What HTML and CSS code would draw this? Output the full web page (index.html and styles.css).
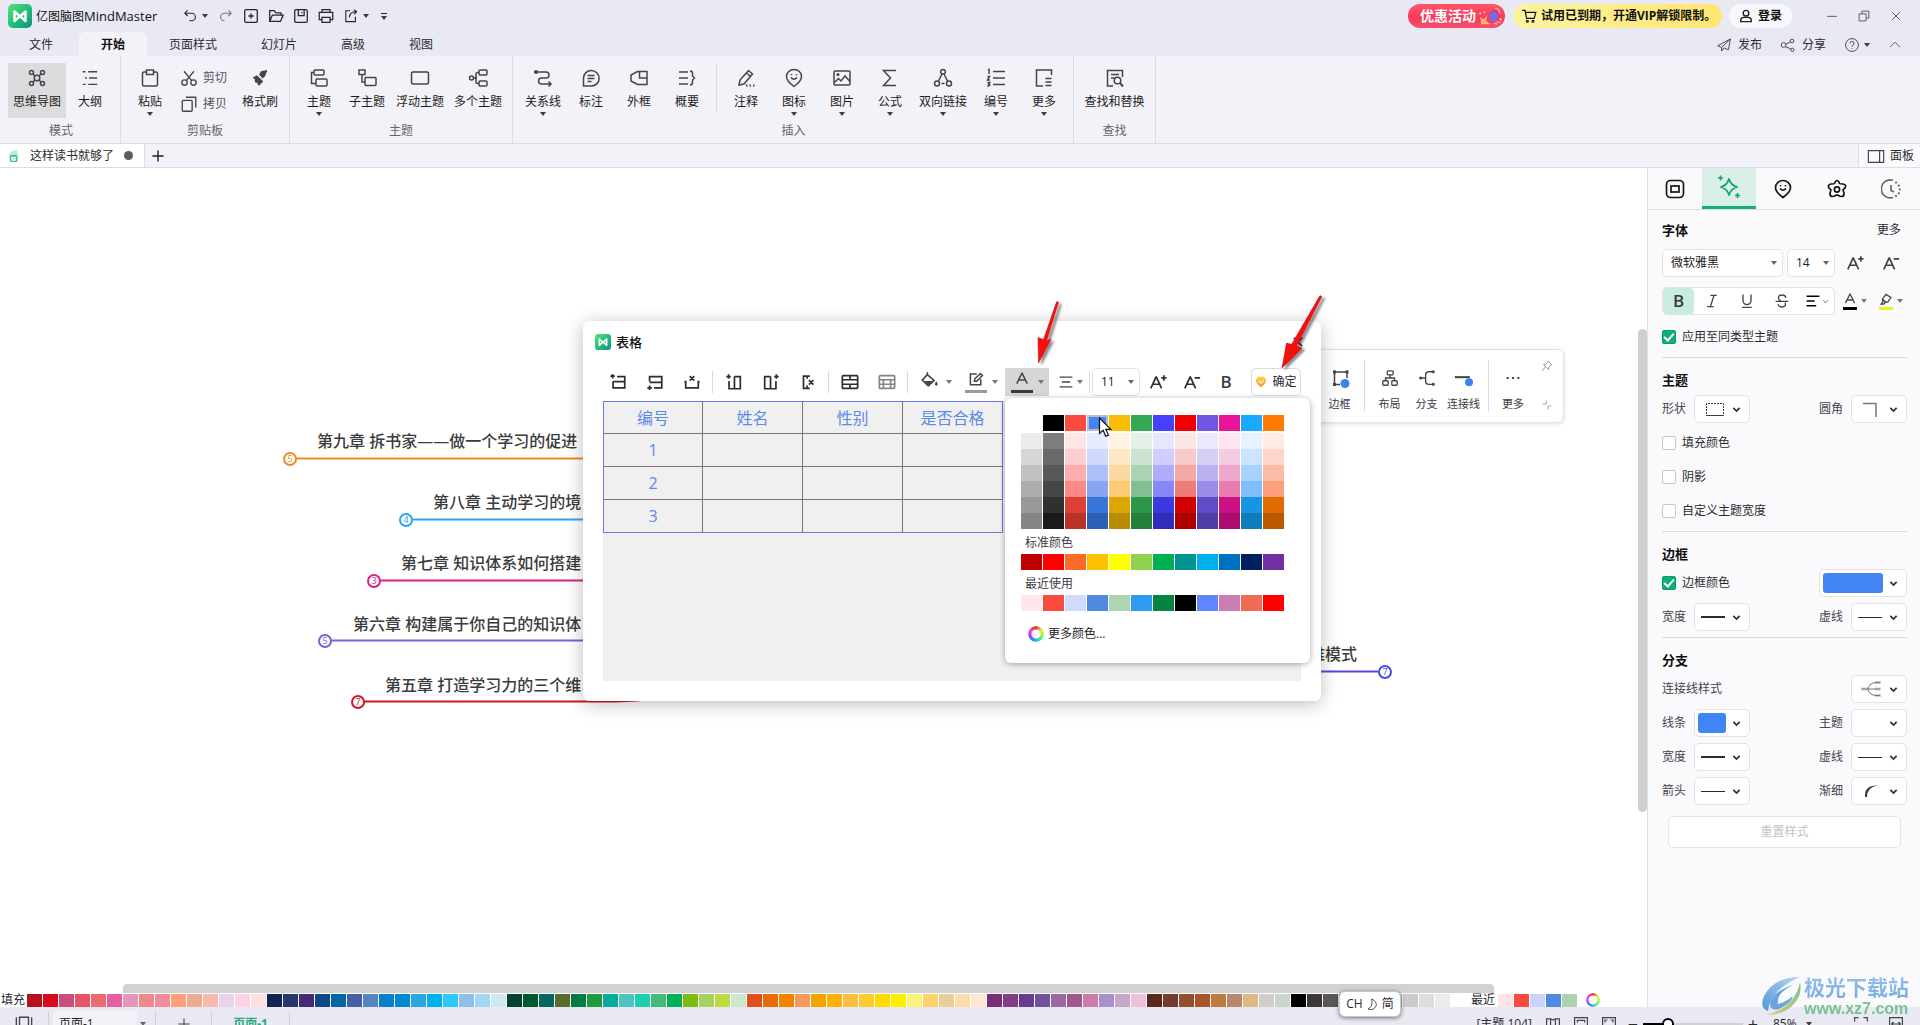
FILE: index.html
```html
<!DOCTYPE html>
<html lang="zh-CN">
<head>
<meta charset="utf-8">
<title>亿图脑图MindMaster</title>
<link rel="stylesheet" href="styles.css">
</head>
<body>
<svg class="sprite" aria-hidden="true">
  <defs>
    <linearGradient id="g-logo" x1="0" y1="0" x2="1" y2="1"><stop offset="0" stop-color="#5be07a"/><stop offset=".5" stop-color="#22c07a"/><stop offset="1" stop-color="#0f8f86"/></linearGradient>
    <linearGradient id="g-gem" x1="0" y1="0" x2="0" y2="1"><stop offset="0" stop-color="#ffd24a"/><stop offset="1" stop-color="#ff8f1f"/></linearGradient>
    <linearGradient id="g-wm1" x1="0" y1="1" x2="1" y2="0"><stop offset="0" stop-color="#2f7fd0"/><stop offset="1" stop-color="#9fd0f2"/></linearGradient>
    <linearGradient id="g-wm2" x1="0" y1="1" x2="1" y2="0"><stop offset="0" stop-color="#c9c94a"/><stop offset="1" stop-color="#5fb27a"/></linearGradient>
    <symbol id="logo" viewBox="0 0 24 24"><rect width="24" height="24" rx="5" fill="url(#g-logo)"/><path d="M6.5 17V7.500l5.500 5 5.500-5V17l-5.500-5z" fill="none" stroke="#fff" stroke-width="2.400" stroke-linejoin="round"/></symbol>
    <symbol id="i-undo" viewBox="0 0 20 20"><path d="M7 3 3.500 6.500 7 10M4 6.500h8a4.500 4.500 0 0 1 0 9.500H9"/></symbol>
    <symbol id="i-redo" viewBox="0 0 20 20"><path d="m13 3 3.500 3.500L13 10m3-3.500H8A4.500 4.500 0 0 0 8 16"/></symbol>
    <symbol id="i-new" viewBox="0 0 20 20"><rect x="3" y="3" width="14" height="14" rx="1.500"/><path d="M10 7v6M7 10h6"/></symbol>
    <symbol id="i-open" viewBox="0 0 20 20"><path d="M3 16V4h5l2 2.500h5.500V9M3 16l3-7h12l-3 7z"/></symbol>
    <symbol id="i-save" viewBox="0 0 20 20"><rect x="3" y="3" width="14" height="14" rx="1.500"/><path d="M7 3v6.500h6.500V3M11 5.500v1.500"/></symbol>
    <symbol id="i-print" viewBox="0 0 20 20"><path d="M5.500 6V3h9v3M5 14H2.500V6h15v8H15M5.500 11.500h9V17h-9z"/></symbol>
    <symbol id="i-export" viewBox="0 0 20 20"><path d="M9 3.500H3.500v13.500h12V11M8 12c0-5 3-7.500 9-7.500M13.500 2 17 4.500 14 8"/></symbol>
    <symbol id="i-mind" viewBox="0 0 20 20"><circle cx="10" cy="10" r="2.800"/><circle cx="4.500" cy="4.500" r="2"/><circle cx="15.500" cy="4.500" r="2"/><circle cx="4.500" cy="15.500" r="2"/><circle cx="15.500" cy="15.500" r="2"/><path d="M6 6l2 2M14 6l-2 2M6 14l2-2M14 14l-2-2"/></symbol>
    <symbol id="i-outline" viewBox="0 0 20 20"><path d="M2 3h3M8 3h10M4.500 10h2M9 10h9M2 17h3M8 17h10"/></symbol>
    <symbol id="i-paste" viewBox="0 0 20 20"><rect x="2.500" y="4" width="15" height="14" rx="1.500"/><path d="M6.500 2h7v4.500h-7z" fill="#f2f2f8"/></symbol>
    <symbol id="i-cut" viewBox="0 0 20 20"><circle cx="5" cy="15" r="3"/><circle cx="15" cy="15" r="3"/><path d="M4.500 2.500 13 13M15.500 2.500 7 13"/></symbol>
    <symbol id="i-copy" viewBox="0 0 20 20"><rect x="2.500" y="6" width="11" height="12" rx="1"/><path d="M6.500 2.500h11V14"/></symbol>
    <symbol id="i-brush" viewBox="0 0 20 20"><path d="M12.500 7 17.500 2M5.500 8l7 7" /><path d="M11 2.500 18 1l-2 6.500-3 3-4-4zM2 9.500 6.500 7l7 6.500-4.500 5-2-1.500.500-2-2 .5-1.500-2 .5-1.500z" fill="#454549" stroke="none"/></symbol>
    <symbol id="i-topic" viewBox="0 0 20 20"><rect x="5" y="2" width="10" height="5" rx="1"/><rect x="7" y="11" width="11" height="7" rx="1"/><path d="M5 4.500H2.500v11H7"/></symbol>
    <symbol id="i-subtopic" viewBox="0 0 20 20"><rect x="2" y="2" width="6" height="4.500"/><rect x="8" y="9.500" width="11" height="8" rx="1"/><path d="M5 7v7h3"/></symbol>
    <symbol id="i-float" viewBox="0 0 20 20"><rect x="1.500" y="4" width="17" height="12" rx="1.500"/></symbol>
    <symbol id="i-multi" viewBox="0 0 20 20"><rect x="11" y="2" width="8" height="5" rx="1"/><rect x="11" y="13" width="8" height="5" rx="1"/><circle cx="3.500" cy="10" r="2"/><path d="M5.500 10H9M11 4.500H9.500Q8 4.500 8 6v8q0 1.500 1.500 1.500H11"/></symbol>
    <symbol id="i-relation" viewBox="0 0 20 20"><circle cx="3" cy="4" r="1.300" fill="#454549"/><path d="M3 4h10q3 0 3 3t-3 3H8.500q-3 0-3 3t3 3H18M15.500 13.500 18 16l-2.500 2.500"/></symbol>
    <symbol id="i-note" viewBox="0 0 20 20"><path d="M2.500 18V10a7.800 7.800 0 1 1 8 8zM6.500 7.500h7M6.500 10.500h7M6.500 13.500h4"/></symbol>
    <symbol id="i-frame" viewBox="0 0 20 20"><path d="M18 3.500H8.500L2 7v6l6.500 3.500H18zM18 10h-7.500V4"/></symbol>
    <symbol id="i-summary" viewBox="0 0 20 20"><path d="M2 4h9M2 10h9M2 16h9M13 3q2.500 0 2.500 2.500V8l2 2-2 2v2.500Q15.500 17 13 17"/></symbol>
    <symbol id="i-pen" viewBox="0 0 20 20"><path d="M3 17l1-5 8.500-9.500 4 3.500L8 16zM10.500 5l4 3.500"/><path d="M10 17.500h1.500M13.500 17.500H15M17 17.500h1.500" stroke-width="2"/></symbol>
    <symbol id="i-smile" viewBox="0 0 20 20"><path d="M10 18.500q-7.500-5.500-7.500-10a7.500 7 0 0 1 15 0q0 4.500-7.500 10zM7 9.500q3 3.500 6 0M7.500 6v1.200M12.500 6v1.200"/></symbol>
    <symbol id="i-image" viewBox="0 0 20 20"><rect x="2" y="3" width="16" height="14" rx="1"/><path d="m2.500 14.500 4-4 2.500 2.500 4-5 5 5.500"/><circle cx="6" cy="6.500" r=".8"/></symbol>
    <symbol id="i-sigma" viewBox="0 0 20 20"><path d="M16 2.500H3.500l7 7.500-7 7.500H16"/></symbol>
    <symbol id="i-link" viewBox="0 0 20 20"><circle cx="10" cy="3.800" r="2.300"/><circle cx="4" cy="15.500" r="2.500"/><circle cx="16" cy="15.500" r="2.500"/><path d="m9 6-3.500 7M11 6l3.500 7M8.500 15.500h3"/></symbol>
    <symbol id="i-number" viewBox="0 0 20 20"><path d="M7 3.500h12M7 10h12M7 16.500h12M2 2l1-.5V6M1.500 8.500h2L1.500 12h2.500M1.500 14.500h2.200L2.500 16l1.300 1-2.300 1.500"/></symbol>
    <symbol id="i-more" viewBox="0 0 20 20"><path d="M17.500 7V2h-15v16H9M11.500 10.500h6M11.500 14h6M11.500 17.500h6"/></symbol>
    <symbol id="i-find" viewBox="0 0 20 20"><path d="M17.500 9V2.500h-15V18H8M6 6.500h8M6 10h3"/><circle cx="12.500" cy="12.500" r="3.300"/><path d="m15 15 3 3.500" stroke-width="2"/></symbol>
    <symbol id="i-cart" viewBox="0 0 20 20"><path d="M1.500 3H5l2 10h9.500l2-7.500H6"/><circle cx="8" cy="16.500" r="1.200"/><circle cx="15" cy="16.500" r="1.200"/></symbol>
    <symbol id="i-user" viewBox="0 0 20 20"><circle cx="10" cy="6" r="4"/><path d="M2.500 18v-2.500Q3 12 7 12h6q4 0 4.500 3.500V18z"/></symbol>
    <symbol id="i-min" viewBox="0 0 20 20"><path d="M3 10.500h14"/></symbol>
    <symbol id="i-restore" viewBox="0 0 20 20"><path d="M3 7h10v10H3zM7 7V3h10v10h-4"/></symbol>
    <symbol id="i-x" viewBox="0 0 20 20"><path d="m4 4 12 12M16 4 4 16"/></symbol>
    <symbol id="i-plane" viewBox="0 0 20 20"><path d="M18 2.500 2 11l5 2zM18 2.500 15.500 16 10 13.500M7 13v4.500l3-4"/></symbol>
    <symbol id="i-share" viewBox="0 0 20 20"><circle cx="4.500" cy="10" r="3"/><circle cx="15" cy="5" r="2.300"/><circle cx="15.500" cy="16" r="2"/><path d="m7.500 9 5.500-3M7 12l6.500 3"/></symbol>
    <symbol id="i-help" viewBox="0 0 20 20"><circle cx="10" cy="10" r="8"/><path d="M7.500 8a2.500 2.500 0 1 1 3.500 2.300q-1 .5-1 2M10 14v1"/></symbol>
    <symbol id="i-up" viewBox="0 0 20 20"><path d="m3 13 7-7 7 7"/></symbol>
    <symbol id="i-plus" viewBox="0 0 20 20"><path d="M10 2v16M2 10h16"/></symbol>
    <symbol id="i-panel" viewBox="0 0 20 20"><path d="M1.500 4h17v13h-17zM14 4v13"/></symbol>
    <symbol id="i-chev" viewBox="0 0 10 10"><path d="m1.500 3.200 3.500 3.500 3.500-3.500"/></symbol>
    <symbol id="p-box" viewBox="0 0 20 20"><rect x="1.500" y="1.500" width="17" height="17" rx="4"/><rect x="6" y="7" width="8" height="6"/></symbol>
    <symbol id="p-star" viewBox="0 0 24 24"><path d="M12 3.500q1.500 7 8.500 8.500-7 1.500-8.500 8.500-1.500-7-8.500-8.500 7-1.500 8.500-8.500zM3.500.5v5M1 3h5M20.500 18v5M18 20.500h5"/></symbol>
    <symbol id="p-flower" viewBox="0 0 20 20"><path d="M10 1.500q1.500 0 2.500 3 .5.500 3.500.5 3 .5 2.500 3-.3 1-2.500 2.800.2 1 1 3.200.3 3-2 3.500-1.500.2-4-1.300h-2q-2.500 1.500-4 1.300-2.300-.5-2-3.500.8-2.200 1-3.200Q1.800 9 1.500 8 1 5.500 4 5q3 0 3.500-.5 1-3 2.500-3z"/><circle cx="10" cy="10.500" r="2.600"/></symbol>
    <symbol id="p-clock" viewBox="0 0 20 20"><path d="M12 18.500A9 9 0 1 1 12 1.300M10 6v5.500l3 1.500"/><path d="M15 3.500h.1M17.800 6.500h.1M18.800 10.500h.1M17.800 14.300h.1M15 17h.1" stroke-width="2.200" stroke-linecap="round"/></symbol>
    <symbol id="i-aplus" viewBox="0 0 20 20"><path d="M2 17 7.800 4.500h.4L14 17M4.500 12.500h7M13.500 5.500h6M16.500 2.500v6"/></symbol>
    <symbol id="i-aminus" viewBox="0 0 20 20"><path d="M2 17 7.800 4.500h.4L14 17M4.500 12.500h7M13 5.500h6"/></symbol>
    <symbol id="i-italic" viewBox="0 0 20 20"><path d="M8 3h8M4 17h8M12.500 3 8 17"/></symbol>
    <symbol id="i-under" viewBox="0 0 20 20"><path d="M5 2v7.500a5 5 0 0 0 10 0V2M4 18h12"/></symbol>
    <symbol id="i-strike" viewBox="0 0 20 20"><path d="M15 6Q14 2.500 10 2.500 5.500 2.500 5.500 6q0 2.500 3 4M2 10.500h16M14 12q1.500 5.500-4 5.500-4.500 0-5-3.500"/></symbol>
    <symbol id="i-left" viewBox="0 0 20 20"><path d="M2 4h16M2 10h10M2 16h12"/></symbol>
    <symbol id="i-center" viewBox="0 0 20 20"><path d="M2 4h16M5 10h10M2 16h16"/></symbol>
    <symbol id="i-acolor" viewBox="0 0 20 20"><path d="M3.500 14.500 9.800 1.500h.4l6.300 13M6.500 10h7"/></symbol>
    <symbol id="i-marker" viewBox="0 0 20 20"><path d="m5 8.500 5-6.500 7 4.500-4.500 6.500-4 .5-1.500 2.500-4 0 2.500-3.500zM5 9l6 4.500"/></symbol>
    <symbol id="t-rowup" viewBox="0 0 20 20"><path d="M9 4h8.500v5.500H4.500M4.500 9.500v7h13v-7M1.500 3.500h5M4 1v5"/></symbol>
    <symbol id="t-rowdown" viewBox="0 0 20 20"><path d="M4 9.500V4h13.500v6.500H4M17.500 10.500v6H9M1.500 16.500h5M4 14v5"/></symbol>
    <symbol id="t-rowdel" viewBox="0 0 20 20"><path d="M3 9v7.500h14V9M7.500 3.500l5 5M12.500 3.500l-5 5M1.500 9.500H4M16 9.500h2.500"/></symbol>
    <symbol id="t-colleft" viewBox="0 0 20 20"><path d="M10.500 4h6.500v13.500h-6.500V4M4.500 9v8.500h6M1.500 4h5M4 1.500v5"/></symbol>
    <symbol id="t-colright" viewBox="0 0 20 20"><path d="M9.500 4H3v13.500h6.500V4M15.500 9v8.500h-6M13.500 4h5M16 1.500v5"/></symbol>
    <symbol id="t-coldel" viewBox="0 0 20 20"><path d="M12 3.500H5v13.500h7M9 3.500v3M9 14v3M11 8l5 5M16 8l-5 5"/></symbol>
    <symbol id="t-merge" viewBox="0 0 20 20"><rect x="1.500" y="3" width="17" height="14" rx="1"/><path d="M2 7.500h16M2 12.500h16M10 3v4.500M10 12.500V17"/></symbol>
    <symbol id="t-split" viewBox="0 0 20 20"><rect x="1.500" y="3" width="17" height="14" rx="1"/><path d="M2 7.500h16M2 12.500h4M14 12.500h4M6 7.500v5M14 7.500v5M6 12.500h8M6 12.500V17M14 12.500V17"/></symbol>
    <symbol id="t-fill" viewBox="0 0 20 20"><path d="M7 1.500v3M7 4l7.500 6.500-6.500 6L1.500 10z"/><path d="M4 11h9.500L8 16z" fill="#454549" stroke="none"/><path d="M17 11.500q3 4 0 5-3-1 0-5z" fill="#454549" stroke="none"/></symbol>
    <symbol id="t-edit" viewBox="0 0 20 20"><path d="M11 2.500H3V16h13V9M8 11.500l.5-3 7-6.500 2.500 2.500-7 7z"/></symbol>
    <symbol id="f-border" viewBox="0 0 20 20"><path d="M3 4h15M4.500 2.500v15M3 16.500h7M17 2.500V10"/><path d="M3 2.500h3v3H3zM15.500 2.500h3v3h-3zM3 15h3v3H3z" fill="#454549" stroke="none"/><circle cx="15" cy="15.500" r="4.500" fill="#3f83f2" stroke="none"/></symbol>
    <symbol id="f-layout" viewBox="0 0 20 20"><rect x="7" y="2" width="6.500" height="4.500" rx="1"/><rect x="2" y="13" width="6" height="5" rx="1"/><rect x="12" y="13" width="6" height="5" rx="1"/><path d="M10 6.500v3.500M5 13v-3h10v3"/></symbol>
    <symbol id="f-branch" viewBox="0 0 20 20"><path d="M2 10h6M17 3h-5Q8.500 3 8.500 6.500v7Q8.500 17 12 17h5"/><circle cx="3" cy="10" r="1" /><circle cx="17" cy="3" r="1"/><circle cx="17" cy="17" r="1"/></symbol>
    <symbol id="f-line" viewBox="0 0 24 20"><path d="M1 9h18" stroke-width="2.500"/><circle cx="18" cy="15" r="4.800" fill="#3f83f2" stroke="none"/></symbol>
    <symbol id="f-dots" viewBox="0 0 20 20"><path d="M2 10h2.500M8.800 10h2.500M15.500 10H18" stroke-width="2.500"/></symbol>
    <symbol id="f-pin" viewBox="0 0 20 20"><path d="m12 2 6 6-2 .5-3 3.500-.5 4L4 7.500 8 7l3.500-3zM7 12l-5 6"/></symbol>
    <symbol id="f-collapse" viewBox="0 0 20 20"><path d="M8.500 1v7H1M12 19v-7h7"/></symbol>
  </defs>
</svg>

<div class="app">
  <header class="titlebar">
    <svg class="logo"><use href="#logo"/></svg>
    <h1 class="app-name">亿图脑图<span class="latin">MindMaster</span></h1>
    <nav class="quick" aria-label="快速访问">
      <button class="q wide" aria-label="撤销"><svg class="i16"><use href="#i-undo"/></svg><i class="caret"></i></button>
      <button class="q" aria-label="重做"><svg class="i16 faint"><use href="#i-redo"/></svg></button>
      <button class="q" aria-label="新建"><svg class="i18"><use href="#i-new"/></svg></button>
      <button class="q" aria-label="打开"><svg class="i18"><use href="#i-open"/></svg></button>
      <button class="q" aria-label="保存"><svg class="i18"><use href="#i-save"/></svg></button>
      <button class="q" aria-label="打印"><svg class="i18"><use href="#i-print"/></svg></button>
      <button class="q wide" aria-label="导出"><svg class="i16"><use href="#i-export"/></svg><i class="caret"></i></button>
      <button class="q last" aria-label="自定义"><i class="caret lined"></i></button>
    </nav>
    <div class="title-right">
      <button class="pill promo">优惠活动<svg class="party" viewBox="0 0 32 22"><path d="M14 8 24 1l5 7-3 9-9 2z" fill="#e8335f"/><path d="m15 8 7-3 5 6-4 6-7 0z" fill="#7b68e8"/><path d="M4 12l4 3 5-5-2 7 6 4H5z" fill="#ffb46a"/><path d="M22 2q5-1 6 6M24 18l5 1M21 20l4 1" stroke="#ff9bb8" stroke-width="2" fill="none"/><circle cx="4" cy="8" r="1.200" fill="#ffd27a"/><circle cx="9" cy="6" r="1.200" fill="#ffd27a"/><circle cx="29" cy="15" r="1.500" fill="#ffd27a"/></svg></button>
      <button class="pill vip"><svg class="i16"><use href="#i-cart"/></svg>试用已到期，开通VIP解锁限制。</button>
      <button class="pill login"><svg class="i14 bold"><use href="#i-user"/></svg>登录</button>
      <button class="win" aria-label="最小化"><svg class="i16"><use href="#i-min"/></svg></button>
      <button class="win" aria-label="还原"><svg class="i16"><use href="#i-restore"/></svg></button>
      <button class="win" aria-label="关闭"><svg class="i16"><use href="#i-x"/></svg></button>
    </div>
  </header>

  <div class="menubar">
    <nav class="menus">
      <button class="menu file">文件</button><button class="menu on">开始</button><button class="menu">页面样式</button><button class="menu">幻灯片</button><button class="menu">高级</button><button class="menu">视图</button>
    </nav>
    <div class="menu-right">
      <button class="mr"><svg class="i16"><use href="#i-plane"/></svg>发布</button>
      <button class="mr"><svg class="i16"><use href="#i-share"/></svg>分享</button>
      <button class="mr help" aria-label="帮助"><svg class="i16"><use href="#i-help"/></svg><i class="caret"></i></button>
      <button class="mr" aria-label="收起"><svg class="i14"><use href="#i-up"/></svg></button>
    </div>
  </div>

  <section class="ribbon">
    <div class="group first"><div class="tools">
      <button class="tool w58 on"><svg class="i20"><use href="#i-mind"/></svg>思维导图</button>
      <button class="tool"><svg class="i18"><use href="#i-outline"/></svg>大纲</button>
    </div><p class="group-name">模式</p></div>
    <div class="group"><div class="tools">
      <button class="tool"><svg class="i20"><use href="#i-paste"/></svg>粘贴<i class="caret"></i></button>
      <div class="pair">
        <button class="small"><svg class="i18"><use href="#i-cut"/></svg>剪切</button>
        <button class="small"><svg class="i18"><use href="#i-copy"/></svg>拷贝</button>
      </div>
      <button class="tool"><svg class="i18"><use href="#i-brush"/></svg>格式刷</button>
    </div><p class="group-name">剪贴板</p></div>
    <div class="group"><div class="tools">
      <button class="tool"><svg class="i20"><use href="#i-topic"/></svg>主题<i class="caret"></i></button>
      <button class="tool"><svg class="i20"><use href="#i-subtopic"/></svg>子主题</button>
      <button class="tool w58"><svg class="i20"><use href="#i-float"/></svg>浮动主题</button>
      <button class="tool w58"><svg class="i20"><use href="#i-multi"/></svg>多个主题</button>
    </div><p class="group-name">主题</p></div>
    <div class="group insert"><div class="tools">
      <button class="tool"><svg class="i20"><use href="#i-relation"/></svg>关系线<i class="caret"></i></button>
      <button class="tool"><svg class="i20"><use href="#i-note"/></svg>标注</button>
      <button class="tool"><svg class="i20"><use href="#i-frame"/></svg>外框</button>
      <button class="tool"><svg class="i20"><use href="#i-summary"/></svg>概要</button>
      <i class="rule"></i>
      <button class="tool"><svg class="i20"><use href="#i-pen"/></svg>注释</button>
      <button class="tool"><svg class="i20"><use href="#i-smile"/></svg>图标<i class="caret"></i></button>
      <button class="tool"><svg class="i20"><use href="#i-image"/></svg>图片<i class="caret"></i></button>
      <button class="tool"><svg class="i20"><use href="#i-sigma"/></svg>公式<i class="caret"></i></button>
      <button class="tool w58"><svg class="i20"><use href="#i-link"/></svg>双向链接<i class="caret"></i></button>
      <button class="tool"><svg class="i20"><use href="#i-number"/></svg>编号<i class="caret"></i></button>
      <button class="tool"><svg class="i20"><use href="#i-more"/></svg>更多<i class="caret"></i></button>
    </div><p class="group-name">插入</p></div>
    <div class="group"><div class="tools">
      <button class="tool w70"><svg class="i20"><use href="#i-find"/></svg>查找和替换</button>
    </div><p class="group-name">查找</p></div>
  </section>

  <div class="docbar">
    <button class="doc"><svg class="doc-icon" viewBox="0 0 14 14"><path d="M2 5q4-5 8-3.500Q12 6 11 13H3z" fill="#b9ecd2"/><rect x="3" y="6" width="7" height="7" rx="1.500" fill="#2fc487"/><path d="M5 8.500h3v2.500H5z" fill="none" stroke="#fff"/></svg>这样读书就够了<i class="dirty"></i></button>
    <button class="add" aria-label="新建文档"><svg class="i14 bold"><use href="#i-plus"/></svg></button>
    <button class="panel-toggle"><svg class="i18"><use href="#i-panel"/></svg>面板</button>
  </div>

  <main class="work">
    <div class="stage">
      <div class="canvas">
        <svg class="links" width="1638" height="816">
          <g fill="none" stroke-width="2">
            <path d="M296 290.500H600" stroke="#f08a24"/><path d="M412 351.500H600" stroke="#2ba5f0"/><path d="M380 412.500H600" stroke="#d4258a"/><path d="M331 472.500H600" stroke="#7b62d6"/><path d="M364 533.500H600q30 0 45-2" stroke="#cf1a24"/><path d="M1300 503.500h78" stroke="#4f48e0"/>
          </g>
        </svg>
        <div class="topic t9">第九章 拆书家——做一个学习的促进</div>
        <div class="topic t8">第八章 主动学习的境</div>
        <div class="topic t7">第七章 知识体系如何搭建</div>
        <div class="topic t6">第六章 构建属于你自己的知识体</div>
        <div class="topic t5">第五章 打造学习力的三个维</div>
        <div class="topic tr">思维模式</div>
        <button class="count c9">5</button><button class="count c8">4</button><button class="count c7">3</button><button class="count c6">5</button><button class="count c5">7</button><button class="count cr">7</button>

        <div class="float-bar">
          <button class="fb"><svg class="i20"><use href="#f-border"/></svg>边框</button>
          <i class="rule"></i>
          <button class="fb"><svg class="i18"><use href="#f-layout"/></svg>布局</button>
          <button class="fb"><svg class="i18"><use href="#f-branch"/></svg>分支</button>
          <button class="fb"><svg class="i20"><use href="#f-line"/></svg>连接线</button>
          <i class="rule"></i>
          <button class="fb more"><svg class="i16"><use href="#f-dots"/></svg>更多</button>
          <div class="fb-side"><svg class="i12"><use href="#f-pin"/></svg><svg class="i10"><use href="#f-collapse"/></svg></div>
        </div>

        <section class="dialog" role="dialog" aria-label="表格">
          <header class="dialog-head"><svg class="i16 plain"><use href="#logo"/></svg><h2>表格</h2><button class="close" aria-label="关闭"><svg class="i14 bold"><use href="#i-x"/></svg></button></header>
          <div class="bar">
            <button class="tb" aria-label="上方插入行"><svg class="i18"><use href="#t-rowup"/></svg></button>
            <button class="tb" aria-label="下方插入行"><svg class="i18"><use href="#t-rowdown"/></svg></button>
            <button class="tb" aria-label="删除行"><svg class="i18"><use href="#t-rowdel"/></svg></button>
            <i class="rule"></i>
            <button class="tb" aria-label="左侧插入列"><svg class="i18"><use href="#t-colleft"/></svg></button>
            <button class="tb" aria-label="右侧插入列"><svg class="i18"><use href="#t-colright"/></svg></button>
            <button class="tb" aria-label="删除列"><svg class="i18"><use href="#t-coldel"/></svg></button>
            <i class="rule"></i>
            <button class="tb" aria-label="合并单元格"><svg class="i18"><use href="#t-merge"/></svg></button>
            <button class="tb dim" aria-label="拆分单元格"><svg class="i18"><use href="#t-split"/></svg></button>
            <i class="rule"></i>
            <button class="split fill" aria-label="填充"><span class="ink none"><svg class="i18"><use href="#t-fill"/></svg></span><i class="caret"></i></button>
            <button class="split" aria-label="边框颜色"><span class="ink grey"><svg class="i16"><use href="#t-edit"/></svg></span><i class="caret"></i></button>
            <button class="split on" aria-label="字体颜色"><span class="ink dark"><svg class="i16"><use href="#i-acolor"/></svg></span><i class="caret"></i></button>
            <button class="split slim" aria-label="对齐"><svg class="i16"><use href="#i-center"/></svg><i class="caret"></i></button>
            <i class="rule"></i>
            <span class="pick w47"><select aria-label="字号"><option>11</option></select><i class="caret"></i></span>
            <button class="tb a" aria-label="增大字号"><svg class="i18"><use href="#i-aplus"/></svg></button>
            <button class="tb a" aria-label="减小字号"><svg class="i18"><use href="#i-aminus"/></svg></button>
            <button class="tb a letter">B</button>
            <button class="ok"><svg class="gem" viewBox="0 0 14 14"><path d="M3.500 1h7L13 4.500q.5 4-6 8.500-6.500-4.500-6-8.500z" fill="url(#g-gem)"/><path d="m4 5.500 3 3 3-3" fill="none" stroke="#fff0c8" stroke-width="1.400"/></svg>确定</button>
          </div>
          <div class="sheet">
            <table class="grid">
              <tr><th>编号</th><th>姓名</th><th>性别</th><th>是否合格</th></tr>
              <tr><td>1</td><td></td><td></td><td></td></tr>
              <tr><td>2</td><td></td><td></td><td></td></tr>
              <tr><td>3</td><td></td><td></td><td></td></tr>
            </table>
          </div>
        </section>

        <section class="colors" aria-label="字体颜色">
          <div class="sw theme" data-colors="theme"></div>
          <div class="sw tints" data-colors="tints"></div>
          <h3>标准颜色</h3>
          <div class="sw" data-colors="standard"></div>
          <h3>最近使用</h3>
          <div class="sw" data-colors="recent"></div>
          <button class="more-colors"><i class="wheel"></i>更多颜色...</button>
        </section>

        <svg class="marks" width="1638" height="816" aria-hidden="true">
          <defs><filter id="drop" x="-50%" y="-20%" width="200%" height="150%"><feDropShadow dx="3" dy="2" stdDeviation="1.200" flood-opacity=".45"/></filter></defs>
          <g fill="#f80808" stroke="#c81818" stroke-width=".6" stroke-linejoin="round" filter="url(#drop)">
            <path d="M1056.500 134q1.500-1 2 .5L1046.500 173l4.500-2-12.500 24-.5-25.500 5.500 2z"/>
            <path d="M1319.700 128q1.500-1 2 1L1296.500 178l5.500 2-20 20 4.500-25 5 1.500z"/>
          </g>
          <path d="M1099.500 250v15.500l3.600-3.200 2.600 6 2.700-1.200-2.600-5.700h5z" fill="#fff" stroke="#111" stroke-width="1.200"/>
        </svg>
        <div class="vscroll"></div>
      </div>
      <div class="hscroll-track"><div class="hscroll"></div></div>
      <div class="palette">
        <span class="pal-label">填充</span><div class="pal" data-colors="fill"></div>
        <span class="pal-label recent">最近</span><div class="pal" data-colors="fillRecent"></div>
        <i class="wheel small-wheel"></i>
      </div>
    </div>

    <aside class="panel">
      <nav class="ptabs">
        <button class="ptab" aria-label="页面"><svg class="i20"><use href="#p-box"/></svg></button>
        <button class="ptab on" aria-label="样式"><svg class="i24"><use href="#p-star"/></svg></button>
        <button class="ptab" aria-label="图标"><svg class="i20"><use href="#i-smile"/></svg></button>
        <button class="ptab" aria-label="剪贴画"><svg class="i20"><use href="#p-flower"/></svg></button>
        <button class="ptab grey" aria-label="历史"><svg class="i20"><use href="#p-clock"/></svg></button>
      </nav>
      <section class="sec font-sec">
        <div class="head"><h2>字体</h2><a href="#more">更多</a></div>
        <div class="line font-line">
          <span class="pick w121"><select aria-label="字体"><option>微软雅黑</option></select><i class="caret"></i></span>
          <span class="pick w47"><select aria-label="字号"><option>14</option></select><i class="caret"></i></span>
          <button class="ic" aria-label="增大字号"><svg class="i18"><use href="#i-aplus"/></svg></button>
          <button class="ic" aria-label="减小字号"><svg class="i18"><use href="#i-aminus"/></svg></button>
        </div>
        <div class="line font-line">
          <div class="seg">
            <button class="sb letter on">B</button>
            <button class="sb" aria-label="斜体"><svg class="i16"><use href="#i-italic"/></svg></button>
            <button class="sb" aria-label="下划线"><svg class="i16"><use href="#i-under"/></svg></button>
            <button class="sb" aria-label="删除线"><svg class="i16"><use href="#i-strike"/></svg></button>
            <button class="sb" aria-label="对齐"><svg class="i16 black"><use href="#i-left"/></svg><svg class="chev thin"><use href="#i-chev"/></svg></button>
          </div>
          <button class="ic mini" aria-label="字体颜色"><span class="ink black"><svg class="i14"><use href="#i-acolor"/></svg></span><i class="caret"></i></button>
          <button class="ic mini" aria-label="突出显示"><span class="ink yellow"><svg class="i14"><use href="#i-marker"/></svg></span><i class="caret"></i></button>
        </div>
        <label class="check"><input type="checkbox" checked>应用至同类型主题</label>
      </section>
      <section class="sec">
        <div class="head"><h2>主题</h2></div>
        <div class="line"><span class="lb">形状</span><button class="drop"><svg class="pic" viewBox="0 0 24 16"><path d="M5.500 13V2.500h17V13" stroke-dasharray="2 1" stroke-width="1"/><path d="M5 14.500h18" stroke-width="1"/></svg><svg class="chev"><use href="#i-chev"/></svg></button><span class="lb end">圆角</span><button class="drop"><svg class="pic" viewBox="0 0 24 16"><path d="M5 2.500h13V16" stroke="#77777d"/></svg><svg class="chev"><use href="#i-chev"/></svg></button></div>
        <label class="check"><input type="checkbox">填充颜色</label>
        <label class="check"><input type="checkbox">阴影</label>
        <label class="check"><input type="checkbox">自定义主题宽度</label>
      </section>
      <section class="sec">
        <div class="head"><h2>边框</h2></div>
        <div class="line"><label class="check"><input type="checkbox" checked>边框颜色</label><button class="drop colour push" aria-label="边框颜色"><i class="chip big"></i><svg class="chev"><use href="#i-chev"/></svg></button></div>
        <div class="line"><span class="lb">宽度</span><button class="drop"><i class="stroke thick"></i><svg class="chev"><use href="#i-chev"/></svg></button><span class="lb end">虚线</span><button class="drop"><i class="stroke"></i><svg class="chev"><use href="#i-chev"/></svg></button></div>
      </section>
      <section class="sec final">
        <div class="head"><h2>分支</h2></div>
        <div class="line"><span class="lb">连接线样式</span><button class="drop push"><svg class="pic" viewBox="0 0 24 16"><path d="M3 8h7M17 1.500h6M17 8h6M17 14.500h6" stroke="#cfcfd2" stroke-width="3"/><path d="M4 8h18M22 1.500h-5Q10.500 3 10 8q.5 5 7 6.500h5" stroke="#77777d" stroke-width="1"/></svg><svg class="chev"><use href="#i-chev"/></svg></button></div>
        <div class="line"><span class="lb">线条</span><button class="drop colour"><i class="chip"></i><svg class="chev"><use href="#i-chev"/></svg></button><span class="lb end">主题</span><button class="drop"><i class="stroke empty"></i><svg class="chev"><use href="#i-chev"/></svg></button></div>
        <div class="line"><span class="lb">宽度</span><button class="drop"><i class="stroke thick"></i><svg class="chev"><use href="#i-chev"/></svg></button><span class="lb end">虚线</span><button class="drop"><i class="stroke"></i><svg class="chev"><use href="#i-chev"/></svg></button></div>
        <div class="line"><span class="lb">箭头</span><button class="drop"><i class="stroke"></i><svg class="chev"><use href="#i-chev"/></svg></button><span class="lb end">渐细</span><button class="drop"><svg class="pic" viewBox="0 0 24 16"><path d="M7 14Q6 2 20 2.500 9 4 9 14z" fill="#3a3a3e" stroke="none"/></svg><svg class="chev"><use href="#i-chev"/></svg></button></div>
        <button class="reset" disabled>重置样式</button>
      </section>
    </aside>
  </main>

  <footer class="status">
    <div class="st-left">
      <button class="st-ic" aria-label="页面视图"><svg class="i18" viewBox="0 0 20 20"><path d="M5 2.500h10v15H5zM1.500 2.500v15M18.500 2.500v15"/></svg></button>
      <span class="pick flat"><select aria-label="页面"><option>页面-1</option></select><i class="caret"></i></span>
      <button class="st-ic add-page" aria-label="添加页面"><svg class="i14"><use href="#i-plus"/></svg></button>
      <button class="page-tab">页面-1</button>
    </div>
    <div class="st-right">
      <span class="sel">[主题 104]</span>
      <button class="vw"><svg class="i16" viewBox="0 0 20 20"><path d="M2 3.500h5l3 1.500 3-1.500h5v13h-5l-3 1.500-3-1.500H2zM7 3.500v13M13 3.500v13"/></svg></button>
      <button class="vw"><svg class="i16" viewBox="0 0 20 20"><path d="M2 2h16v16H2zM5.500 8V5.500h9V8M5.500 12v2.500h9V12"/></svg></button>
      <button class="vw"><svg class="i16" viewBox="0 0 20 20"><path d="M2 2h16v16H2zM5 8V5h3M12 5h3v3M5 12v3h3"/></svg></button>
      <button class="zm">−</button>
      <input class="zoom" type="range" min="0" max="100" value="22" aria-label="缩放">
      <button class="zm">+</button>
      <span class="pct">85%</span><i class="caret"></i>
      <button class="vw fit"><svg class="i16" viewBox="0 0 20 20"><path d="M2 7V2h5M13 2h5v5M2 13v5h5M18 13v5h-5"/></svg></button>
      <button class="vw"><svg class="i16" viewBox="0 0 20 20"><path d="M2 2h16v16H2zM5 10h10M7 7.500 4.500 10 7 12.500M13 7.500l2.500 2.500-2.500 2.500"/></svg></button>
    </div>
  </footer>

  <div class="ime">CH<svg class="moon" viewBox="0 0 12 14"><path d="M5 1q6 2.500 5 7.500-2.500 5.500-9 3.500Q7 9 5 1z"/></svg>简</div>
  <div class="brand">
    <svg class="swoosh" viewBox="0 0 44 40"><path d="M40 1Q14 1 4 20q-5 12 4 15Q10 14 40 1z" fill="url(#g-wm1)"/><path d="M33 9q-17 8-15 19 8-2 15-8-2 8-14 13-7 2-9-3Q9 17 33 9z" fill="#4b8fd8"/><path d="M40 6q3 14-8 24Q22 39 6 39q18-5 25-14 7-8 9-19z" fill="url(#g-wm2)"/></svg>
    <div class="brand-text"><span class="cn">极光下载站</span><span class="url">www.xz7.com</span></div>
  </div>
</div>
<script src="script.js"></script>
</body>
</html>
```
FILE: styles.css
```css
* { box-sizing: border-box; }
body { margin: 0; font: 12px/16px "Open Sans", "Noto Sans CJK SC", sans-serif; color: #2b2b2f; }
h1, h2, h3, p { margin: 0; font-size: 12px; font-weight: 400; }
button { margin: 0; padding: 0; border: 0; background: none; font: inherit; color: inherit; white-space: nowrap; }
svg { display: block; flex: none; fill: none; stroke: #454549; stroke-width: 1.5; overflow: visible; }
.sprite { position: absolute; width: 0; height: 0; }
.i10 { width: 10px; height: 10px; }
.i12 { width: 12px; height: 12px; }
.i14 { width: 14px; height: 14px; }
.i16 { width: 16px; height: 16px; }
.i18 { width: 18px; height: 18px; }
.i20 { width: 20px; height: 20px; }
.i24 { width: 24px; height: 24px; }
.bold { stroke-width: 2; stroke: #222; }
.plain { stroke: none; }
.black { stroke: #000; }
.caret { flex: none; width: 0; height: 0; border: 3px solid transparent; border-top: 4px solid #3c3c40; border-bottom: 0; }
.rule { flex: none; width: 1px; background: #d9d9de; }

.app { display: flex; flex-direction: column; height: 100vh; overflow: hidden; position: relative; background: #e9e9f3; }

/* title bar */
.titlebar { display: flex; align-items: center; height: 32px; padding: 0 8px; flex: none; }
.logo { width: 24px; height: 24px; stroke: none; }
.app-name { margin-left: 4px; color: #111; }
.latin { font-size: 13px; }
.quick { display: flex; align-items: center; margin-left: 20px; }
.q { display: flex; align-items: center; justify-content: center; width: 25px; height: 24px; }
.q.wide { width: 36px; gap: 4px; }
.q svg { stroke-width: 1.4; stroke: #26262a; }
.q .faint { stroke: #77777d; }
.q.last { width: 20px; }
.caret.lined { position: relative; top: 2px; }
.caret.lined::before { content: ""; position: absolute; left: -3px; top: -7px; width: 6px; height: 1px; background: #26262a; }
.title-right { display: flex; align-items: center; margin-left: auto; }
.pill { display: flex; align-items: center; height: 24px; border-radius: 12px; font-weight: 700; color: #111; }
.promo { width: 97px; padding-left: 12px; color: #fff; font-size: 14px; background: linear-gradient(#ff5568, #f93a5c 60%, #f5506e); overflow: hidden; }
.party { width: 26px; height: 20px; margin-left: 1px; stroke: none; }
.vip { margin-left: 8px; width: 209px; padding-left: 8px; gap: 4px; background: linear-gradient(90deg, #fdf3a0, #ffe673); }
.vip svg { stroke: #111; }
.login { margin: 0 24px 0 7px; width: 63px; justify-content: center; gap: 5px; background: #f7f7fc; }
.win { display: flex; justify-content: center; width: 32px; }
.win svg { stroke-width: 1.2; width: 14px; height: 14px; }

/* menu tabs */
.menubar { display: flex; justify-content: space-between; height: 24px; flex: none; }
.menus { display: flex; padding-left: 7px; }
.menu { padding: 2px 22px 0; }
.menu.file { margin-right: 4px; }
.menu.on { background: #f2f2f8; border-radius: 6px 6px 0 0; font-weight: 700; color: #111; }
.menu-right { display: flex; align-items: center; gap: 18px; padding: 1px 18px 0 0; }
.mr { display: flex; align-items: center; gap: 6px; }
.mr svg { stroke-width: 1.2; }
.help .caret { margin-left: -2px; }

/* ribbon */
.ribbon { display: flex; height: 88px; flex: none; background: #f2f2f8; border-bottom: 1px solid #dcdce2; }
.group { padding: 7px 5px 0; border-right: 1px solid #dcdce2; }
.group.first { padding: 7px 6px 0 8px; }
.group.insert { padding-left: 6px; }
.tools { display: flex; height: 56px; }
.tool { display: flex; flex-direction: column; align-items: center; gap: 4px; width: 48px; padding-top: 5px; line-height: 20px; color: #1d1d20; }
.tool .i18 { margin: 1px; }
.tool.w58 { width: 58px; }
.tool.w70 { width: 71px; }
.tool.on { height: 55px; background: #dcdcdf; }
.tool .caret { margin-top: -4px; }
.pair { display: flex; flex-direction: column; padding: 2px 9px 0 6px; }
.small { display: flex; align-items: center; gap: 5px; height: 26px; color: #55555a; }
.group-name { margin-top: 4px; text-align: center; color: #66666b; }
.group .rule { height: 48px; margin: 2px 5px 0; }

/* document tabs */
.docbar { display: flex; height: 24px; flex: none; background: #f2f2f8; border-bottom: 1px solid #dcdce2; }
.doc { display: flex; align-items: center; width: 145px; padding-left: 7px; background: #fff; border-right: 1px solid #dcdce2; }
.doc-icon { width: 14px; height: 14px; margin-right: 9px; stroke: none; }
.dirty { width: 9px; height: 9px; margin-left: 10px; border-radius: 50%; background: #5b5b5f; }
.add { padding: 0 6px; }
.panel-toggle { display: flex; align-items: center; gap: 5px; margin-left: auto; padding: 0 6px 0 8px; background: #fafafd; border-left: 1px solid #dcdce2; }
.panel-toggle svg { stroke-width: 1.3; }

/* work area */
.work { display: flex; flex: 1; min-height: 0; }
.stage { display: flex; flex-direction: column; flex: 1; min-width: 0; background: #fff; }
.canvas { position: relative; flex: 1; min-height: 0; overflow: hidden; }
.links, .marks { position: absolute; left: 0; top: 0; stroke: none; pointer-events: none; }
.topic { position: absolute; font: 500 16px/24px "Open Sans", "Noto Sans CJK SC", sans-serif; color: #3b3b3b; white-space: nowrap; }
.t9 { left: 317px; top: 261px; }
.t8 { left: 433px; top: 322px; }
.t7 { left: 401px; top: 383px; }
.t6 { left: 353px; top: 444px; }
.t5 { left: 385px; top: 505px; }
.tr { left: 1293px; top: 474px; }
.count { position: absolute; width: 14px; height: 14px; border: 2px solid; border-radius: 50%; background: #fff; font-size: 9px; line-height: 10px; }
.c9 { left: 283px; top: 284px; color: #f08a24; }
.c8 { left: 399px; top: 345px; color: #2ba5f0; }
.c7 { left: 367px; top: 406px; color: #d4258a; }
.c6 { left: 318px; top: 466px; color: #7b62d6; }
.c5 { left: 351px; top: 527px; color: #cf1a24; }
.cr { left: 1378px; top: 497px; color: #4f48e0; }
.vscroll { position: absolute; right: 0; top: 161px; width: 9px; height: 483px; border-radius: 5px; background: #cfcfd1; }
.hscroll-track { height: 9px; flex: none; }
.hscroll { width: 1371px; height: 9px; margin-left: 123px; border-radius: 4px 4px 0 0; background: #d2d2d2; }
.palette { display: flex; align-items: center; height: 14px; flex: none; }
.pal-label { width: 27px; padding-left: 1px; line-height: 14px; }
.pal-label.recent { width: 31px; padding-left: 4px; }
.pal { display: flex; gap: 1px; padding-right: 1px; }
.pal i { width: 15px; height: 13px; }
.wheel { flex: none; width: 16px; height: 16px; border-radius: 50%; background: conic-gradient(#d33, #f5e642, #8f3, #2fe0c0, #38f, #a4f, #f4c, #d33); -webkit-mask: radial-gradient(circle, transparent 4px, #000 5px); mask: radial-gradient(circle, transparent 4px, #000 5px); }
.small-wheel { width: 14px; height: 14px; margin-left: 8px; }

/* contextual toolbar */
.float-bar { position: absolute; left: 1200px; top: 181px; width: 364px; height: 74px; display: flex; justify-content: flex-end; padding: 0 9px 0 0; background: #fff; border: 1px solid #e3e3e6; border-radius: 6px; box-shadow: 0 1px 4px #0002; }
.fb { display: flex; flex-direction: column; align-items: center; width: 37px; padding-top: 18px; gap: 8px; font-size: 11px; line-height: 16px; color: #3b3b3f; }
.fb .i18 { margin: 1px; }
.fb .i16 { margin: 2px; }
.fb.more { width: 48px; }
.float-bar .rule { height: 52px; margin: 10px 6px 0; }
.float-bar .rule:last-of-type { margin-right: 0; }
.fb-side { display: flex; flex-direction: column; align-items: center; justify-content: space-between; width: 14px; margin-left: 3px; padding: 10px 0 12px; }
.fb-side svg { stroke: #8a8a90; }

/* table dialog */
.dialog { position: absolute; left: 583px; top: 153px; width: 738px; padding: 0 20px 20px; background: #fff; border-radius: 6px; box-shadow: 0 3px 18px #0004; }
.dialog-head { display: flex; align-items: center; gap: 5px; height: 42px; margin: 0 -8px; }
.dialog-head h2 { font-size: 13px; font-weight: 500; color: #111; }
.close { margin-left: auto; padding: 4px; }
.bar { display: flex; align-items: center; height: 38px; margin-left: -4px; }
.bar .rule { height: 22px; margin: 0 2px; }
.tb { display: flex; justify-content: center; width: 37px; }
.tb.a { width: 34px; }
.tb svg { stroke: #2e2e32; stroke-width: 1.9; }
.tb.dim svg { stroke: #85858a; }
.letter { font: 600 17px/20px "Open Sans", sans-serif; color: #3a3a3e; }
.split { display: flex; align-items: center; gap: 5px; width: 46px; height: 28px; padding-left: 6px; }
.split.fill { margin-left: 3px; }
.split svg, .ic svg { stroke-width: 1.9; }
.split .caret, .ic .caret { border-top-color: #77777c; }
.split.on { width: 44px; background: #d6d6d9; }
.split.slim { width: 38px; padding-left: 9px; gap: 3px; }
.split.slim svg { stroke-width: 1.6; }
.ink { display: flex; justify-content: center; width: 22px; padding-bottom: 2px; border-bottom: 3px solid; }
.ink.none { border-color: transparent; }
.ink.grey { border-color: #9a9a9e; }
.ink.dark { border-color: #3a3a3e; }
.ink.black { width: 14px; border-color: #000; padding: 0; }
.ink.yellow { width: 14px; border-color: #ecf21a; padding: 0; }
.pick { display: flex; align-items: center; height: 28px; background: #fff; border: 1px solid #e2e2e5; border-radius: 5px; }
.pick select { flex: 1; min-width: 0; width: 10px; padding: 0 0 0 8px; border: 0; background: none; appearance: none; font: inherit; color: #222; }
.pick .caret { margin-right: 5px; border-top-color: #66666a; }
.w47 { width: 48px; }
.bar .w47 { margin-right: 1px; }
.w121 { width: 121px; }
.ok { display: flex; align-items: center; justify-content: center; gap: 5px; width: 50px; height: 28px; margin-left: auto; background: #fff; border: 1px solid #dcdcdf; border-radius: 5px; }
.gem { width: 12px; height: 12px; stroke: none; }
.sheet { height: 280px; background: #f0f0f0; }
.grid { border-collapse: collapse; table-layout: fixed; width: 400px; border: 1px solid #6a7be0; color: #5b8be6; font-size: 16px; line-height: 24px; }
.grid th, .grid td { height: 33px; padding: 0; font-weight: 400; text-align: center; border: 1px solid #77777a; }
.grid th { height: 32px; }
.grid tr:first-child th { border-top-color: #6a7be0; }
.grid tr:last-child td { border-bottom-color: #6a7be0; }
.grid tr > :first-child { width: 99px; border-left-color: #6a7be0; }
.grid tr > :last-child { border-right-color: #6a7be0; }

/* colour pop-up */
.colors { position: absolute; left: 1005px; top: 230px; width: 305px; padding: 17px 16px 21px; background: #fff; border-radius: 6px; box-shadow: 0 1px 6px #0005; }
.colors h3 { padding: 6px 4px 3px; line-height: 16px; color: #3c3c40; }
.sw { display: grid; grid-template-columns: repeat(12, 21px); column-gap: 1px; }
.sw button { height: 16px; }
.tints { margin-top: 2px; }
.sw .picked { border: 2px solid #b9bcc4; }
.more-colors { display: flex; align-items: center; gap: 4px; margin: 15px 0 0 7px; color: #222; }

/* right panel */
.panel { width: 273px; flex: none; background: #fafafd; border-left: 1px solid #dedee3; }
.ptabs { display: flex; height: 42px; border-bottom: 1px solid #dcdce2; }
.ptab { display: flex; align-items: center; justify-content: center; width: 54px; }
.ptab svg { stroke: #161618; stroke-width: 1.7; }
.ptab.on { background: #d9efe7; border-bottom: 3px solid #14b07c; }
.ptab.on svg { stroke: #14a674; }
.ptab.grey svg { stroke: #66666a; }
.sec { margin: 0 13px 0 14px; padding: 7px 0 6px; border-bottom: 1px solid #dcdce0; display: flex; flex-direction: column; gap: 6px; }
.font-sec { padding-top: 5px; gap: 10px; }
.font-sec .check { margin-top: -2px; }
.sec.final { border: 0; }
.head { display: flex; align-items: center; justify-content: space-between; height: 30px; margin-bottom: -6px; padding-right: 6px; }
.head h2 { font-size: 13px; font-weight: 700; color: #0e0e10; }
.head a { color: inherit; text-decoration: none; }
.line { display: flex; align-items: center; height: 28px; }
.font-line { gap: 4px; }
.lb { color: #45454a; }
.lb + .drop { margin-left: 8px; }
.lb.end, .push { margin-left: auto; }
.check { display: flex; align-items: center; gap: 6px; height: 28px; }
.check input { appearance: none; width: 14px; height: 14px; margin: 0; border: 1px solid #c8c8cc; border-radius: 2px; background: #fff; }
.check input:checked { background: #0fae7a; border-color: #0b9a6b; }
.check input:checked::after { content: ""; display: block; width: 4px; height: 8px; margin: 0 auto; border: solid #fff; border-width: 0 2px 2px 0; transform: rotate(42deg); }
.drop { display: flex; align-items: center; justify-content: space-between; width: 56px; height: 28px; padding: 0 8px 0 6px; background: #fff; border: 1px solid #e2e2e5; border-radius: 5px; }
.lb + .drop.push { margin-left: auto; }
.drop.colour { padding-left: 3px; }
.drop.colour.push { width: 88px; }
.chip { width: 28px; height: 20px; border-radius: 3px; background: #4285f4; }
.chip.big { width: 60px; }
.pic { width: 24px; height: 16px; stroke: #3c3c40; }
.chev { width: 9px; height: 9px; stroke: #333; stroke-width: 2; }
.chev.thin { width: 7px; height: 7px; stroke-width: 1; }
.stroke { width: 24px; height: 1px; background: #2c2c30; }
.stroke.thick { height: 2px; }
.stroke.empty { background: none; }
.ic { display: flex; align-items: center; justify-content: center; gap: 4px; width: 32px; height: 28px; }
.seg { display: flex; width: 173px; height: 28px; background: #fff; border: 1px solid #e2e2e5; border-radius: 5px; overflow: hidden; }
.sb { display: flex; align-items: center; justify-content: center; gap: 1px; flex: 1; }
.sb svg { stroke-width: 1.7; }
.sb.on { flex: none; width: 31px; background: #c9ece0; border-radius: 4px; }
.reset { height: 32px; margin: 5px 6px 0; background: #fff; border: 1px solid #e4e4e8; border-radius: 5px; color: #c2c2c6; }

/* status bar: the window edge cuts it, so its row is taller than the visible strip */
.status { display: flex; justify-content: space-between; align-items: flex-start; height: 18px; flex: none; background: #e9e9f3; overflow: hidden; }
.st-left, .st-right { display: flex; align-items: center; height: 33px; flex: none; }
.st-ic { display: flex; align-items: center; justify-content: center; width: 49px; height: 24px; border-right: 1px solid #cfcfd6; }
.st-ic.add-page { width: 56px; }
.pick.flat { width: 107px; height: 26px; border: 0; border-right: 1px solid #cfcfd6; border-radius: 0; background: linear-gradient(90deg, transparent 4px, #f2f2f8 4px 88px, transparent 88px); }
.pick.flat .caret { margin-right: 9px; }
.pick.flat select { padding-left: 10px; }
.page-tab { width: 78px; height: 24px; border-right: 1px solid #cfcfd6; color: #2aa77c; font-weight: 700; }
.st-right { padding-right: 10px; }
.sel { margin-right: 7px; }
.vw { display: flex; justify-content: center; width: 28px; }
.zm { width: 20px; font-size: 18px; }
.zoom { appearance: none; width: 100px; height: 14px; margin: 0; background: linear-gradient(90deg, #000 22px, #cfcfd6 22px) center / 100% 2px no-repeat; }
.zoom::-webkit-slider-thumb { appearance: none; width: 12px; height: 12px; border: 2px solid #000; border-radius: 50%; background: #fff; }
.pct { width: 33px; margin-left: 10px; }
.vw.fit { margin: 0 7px 0 35px; }

/* overlays */
.ime { position: absolute; left: 1339px; top: 991px; display: flex; align-items: center; justify-content: center; gap: 4px; width: 62px; height: 26px; border: 1px solid #c8c8c8; border-radius: 6px; background: #fff; box-shadow: 0 1px 4px #0008; font-size: 12px; white-space: nowrap; }
.moon { width: 11px; height: 13px; stroke-width: 1; }
.brand { position: absolute; right: 11px; bottom: 6px; display: flex; align-items: center; opacity: .8; }
.swoosh { width: 44px; height: 40px; stroke: none; }
.brand-text { display: flex; flex-direction: column; }
.cn { font: 700 21px/26px "Noto Sans CJK SC", sans-serif; background: linear-gradient(#7fb6ea, #5a9ad8); -webkit-background-clip: text; background-clip: text; color: transparent; }
.url { font: 700 16px/20px "Liberation Sans", sans-serif; color: #5bb878; }
```
FILE: script.js
```js
// Swatch colours for the pop-up and the fill bar.
const palettes = {
  theme: ['#ffffff', '#000000', '#fb4b3e', '#4285f4', '#fbbc05', '#34a853', '#4640ff', '#f00000', '#7055e3', '#e8149a', '#1ba9ff', '#ff7a00'],
  tints: [
    '#ececec', '#7d7d7d', '#ffe6e6', '#e6ebff', '#fff3e2', '#e6f0e8', '#e6e6ff', '#fbe6e6', '#ebe8fb', '#fce4f1', '#e5f2ff', '#ffebe3',
    '#d6d6d6', '#6a6a6a', '#ffcfcf', '#ced9fb', '#fde7c6', '#cce3d1', '#cfceff', '#f8cacb', '#d5d0f6', '#f4cbe0', '#cce4ff', '#ffd5cb',
    '#c1c1c1', '#585858', '#fdaeb0', '#adc0f7', '#fbdaa2', '#abd3b3', '#aeacfc', '#f4a8a8', '#bab1f0', '#efa7cb', '#aad2ff', '#ffbca5',
    '#adadad', '#454545', '#fb8985', '#86a5f2', '#fbcb75', '#83bf90', '#8886fb', '#f07b7b', '#9b8ce8', '#e97bb0', '#7fbfff', '#ff9f7c',
    '#999999', '#303030', '#dc4034', '#3975d8', '#dca704', '#2d9649', '#3c39e0', '#d30000', '#624bc8', '#cc1187', '#1595e2', '#e16b00',
    '#858585', '#1a1a1a', '#b93328', '#2b61b4', '#b88b03', '#247e3c', '#312dbb', '#af0000', '#513da6', '#aa0c70', '#0f7dbd', '#bb5900'
  ],
  standard: ['#c00000', '#ff0000', '#fa6b2a', '#ffc000', '#ffff00', '#92d050', '#00b050', '#009490', '#00b0f0', '#0070c0', '#002060', '#7030a0'],
  recent: ['#ffe8e8', '#fb4b3e', '#d2dafb', '#4f8ae0', '#b0d3b4', '#2d9cf0', '#04853f', '#000000', '#5f86ff', '#cc7db3', '#f16a56', '#ff0000'],
  fill: [
    '#b5111f', '#d70b1c', '#c94f7c', '#e65467', '#ea6b72', '#e560a0', '#e795b8', '#ec8c8a', '#f08c9b', '#ffa07a', '#eeab92', '#f8b8b0', '#ecd2e6', '#fdd3e4', '#ffdfe2',
    '#122552', '#25376c', '#432a78', '#0e4889', '#0467a2', '#4560a5', '#5785c2', '#0781cc', '#0288d1', '#2fa5e0', '#03b1ef', '#2cc8f8', '#8cc0e8', '#a0d8ef', '#cdeaf4',
    '#02422f', '#005a2f', '#03685f', '#5b6a2d', '#047b44', '#1f9a3c', '#06ab9b', '#4fc3c0', '#1dcfb2', '#45b97c', '#02b155', '#80bb10', '#a5d361', '#bfdb42', '#cde7cb',
    '#e0501f', '#e96b09', '#f18300', '#f59a5b', '#f2a500', '#fdb10a', '#ffbe3f', '#fecb31', '#ffd900', '#fdee00', '#fbf27c', '#fdd16b', '#ebcc9b', '#fddbab', '#fde9d3',
    '#782f75', '#843d84', '#683c93', '#70549b', '#9b689f', '#a0578c', '#d07caa', '#a690cf', '#c5a7c9', '#ecc2db',
    '#59291d', '#753b2e', '#92502c', '#a95529', '#c07a40', '#b9876b', '#deb887', '#d3cec5', '#cbd5cc',
    '#000000', '#3f3737', '#595757', '#727171', '#898989', '#9fa0a0', '#b5b5b6', '#c9caca', '#dcdddd', '#ececec', '#ffffff'
  ],
  fillRecent: ['#ffe3e6', '#fb4b3e', '#c9d3fb', '#4f8ae0', '#acd3b0']
};

document.querySelectorAll('[data-colors]').forEach((row) => {
  const name = row.dataset.colors;
  const tag = row.classList.contains('pal') ? 'i' : 'button';
  palettes[name].forEach((colour, index) => {
    const cell = document.createElement(tag);
    cell.style.backgroundColor = colour;
    if (tag === 'button') cell.setAttribute('aria-label', colour);
    if (name === 'theme' && index === 3) cell.className = 'picked';
    row.append(cell);
  });
});
```
